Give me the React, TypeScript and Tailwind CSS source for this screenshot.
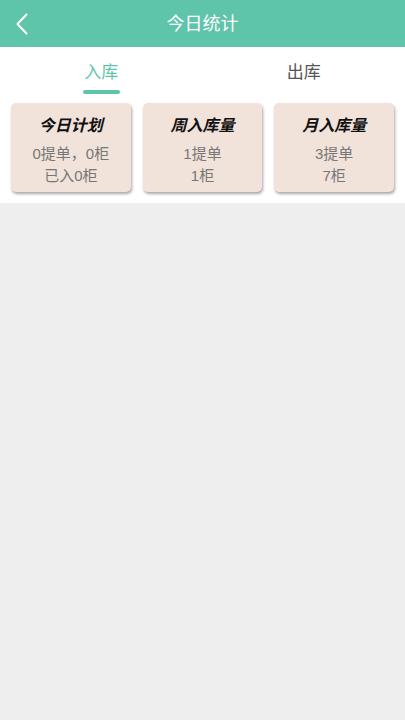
const STATS = [
  { title: '今日计划', lines: ['0提单，0柜', '已入0柜'] },
  { title: '周入库量', lines: ['1提单', '1柜'] },
  { title: '月入库量', lines: ['3提单', '7柜'] },
]

const FONT = { fontFamily: '"Liberation Sans", "Noto Sans CJK SC", sans-serif' }

export default function App() {
  return (
    <div className="min-h-[720px] bg-[#eeeeee]" style={FONT}>
      {/* Header */}
      <div className="relative flex h-[47px] items-center justify-center bg-[#5ec4aa]">
        <button className="absolute left-[12px] top-[12px] flex h-[24px] w-[20px] items-center justify-center">
          <svg width="14" height="22" viewBox="0 0 14 22" fill="none">
            <path d="M11.5 1.5 L2.5 11 L11.5 20.5" stroke="white" strokeWidth="2" strokeLinecap="round" strokeLinejoin="round" />
          </svg>
        </button>
        <h1 className="text-[18px] leading-none text-white">今日统计</h1>
      </div>

      <div className="bg-white pb-[11px]">
        {/* Tabs */}
        <div className="grid grid-cols-2">
          <div className="flex flex-col items-center pt-[16px]">
            <span className="text-[17px] leading-[20px] text-[#5ec4aa]">入库</span>
            <span className="mt-[7px] h-[4px] w-[37px] rounded-full bg-[#5ec4aa]" />
          </div>
          <div className="flex flex-col items-center pt-[16px]">
            <span className="text-[17px] leading-[20px] text-[#555555]">出库</span>
          </div>
        </div>

        {/* Stat cards */}
        <div className="mt-[9px] grid grid-cols-3 gap-[12px] px-[11px]">
          {STATS.map((s) => (
            <div
              key={s.title}
              className="flex h-[89px] flex-col items-center rounded-[5px] bg-[#f1e2da] pt-[12px] shadow-[1px_2px_3px_rgba(0,0,0,0.35)]"
            >
              <span className="text-[16px] font-bold italic leading-[22px] text-[#111111]">{s.title}</span>
              <span className="mt-[6px] text-[15px] leading-[22px] text-[#777777]">{s.lines[0]}</span>
              <span className="text-[15px] leading-[22px] text-[#777777]">{s.lines[1]}</span>
            </div>
          ))}
        </div>
      </div>
    </div>
  )
}
